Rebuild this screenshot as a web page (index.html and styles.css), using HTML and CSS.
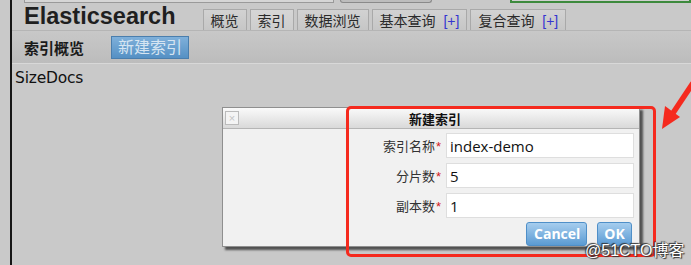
FILE: index.html
```html
<!DOCTYPE html>
<html>
  <head>
    <meta charset="utf-8">
    <link rel="stylesheet" href="styles.css">
  </head>
  <body>
    <div class="frame">
      <div class="topstrip">
        <div class="strip-input"></div>
        <div class="strip-button"></div>
        <div class="strip-green"></div>
      </div>
      <div class="header">
        <h1 class="brand">Elasticsearch</h1>
        <ul class="tabs">
          <li class="tab">概览</li>
          <li class="tab tab-active">索引</li>
          <li class="tab">数据浏览</li>
          <li class="tab">基本查询 <span class="plus">[+]</span></li>
          <li class="tab">复合查询 <span class="plus">[+]</span></li>
        </ul>
      </div>
      <div class="toolbar">
        <span class="toolbar-title">索引概览</span>
        <button class="btn-blue">新建索引</button>
      </div>
      <div class="content">
        <span class="col-head">Size</span><span class="col-head">Docs</span>
      </div>
    </div>

    <div class="dialog">
      <div class="dialog-title">
        <span class="dialog-close">×</span>
        <span class="dialog-caption">新建索引</span>
      </div>
      <div class="dialog-body">
        <form class="dialog-form">
          <label class="field-label">索引名称<span class="req">*</span></label>
          <input class="field-input" type="text" value="index-demo">
          <label class="field-label">分片数<span class="req">*</span></label>
          <input class="field-input" type="text" value="5">
          <label class="field-label">副本数<span class="req">*</span></label>
          <input class="field-input" type="text" value="1">
        </form>
        <div class="dialog-buttons">
          <button class="btn-dlg btn-cancel">Cancel</button>
          <button class="btn-dlg btn-ok">OK</button>
        </div>
      </div>
    </div>

    <div class="highlight"></div>
    <svg class="arrow" width="40" height="60" viewBox="0 0 40 60">
      <line x1="38" y1="2" x2="18" y2="32" stroke="#f52a1e" stroke-width="5.5" />
      <polygon points="7,48 10,25 25,36" fill="#f52a1e" />
    </svg>
    <div class="watermark">@51CTO博客</div>
  </body>
</html>
```

FILE: styles.css
```css
:root {
  --bg: #c9c9c9;
  --line: #a9a9a9;
  --red: #f52a1e;
  --cjk: "Liberation Sans", "Noto Sans CJK SC", sans-serif;
}

html, body {
  margin: 0;
  height: 100%;
}

body {
  background: var(--bg);
  font-family: var(--cjk);
  color: #111;
  overflow: hidden;
  position: relative;
}

.frame {
  margin-left: 10px;
  border-left: 2px solid #161616;
  height: 100%;
  box-sizing: border-box;
}

/* remains of the bar above, cut off by the screenshot */
.topstrip {
  display: flex;
  height: 3px;
  overflow: hidden;
}

.strip-input {
  width: 308px;
  margin-left: 12px;
  border: 1px solid #9a9a9a;
  border-top: none;
  background: #d6d6d6;
}

.strip-button {
  width: 90px;
  margin-left: 6px;
  border: 1px solid #8a8a8a;
  border-top: none;
  border-radius: 0 0 3px 3px;
  background: #bdbdbd;
}

.strip-green {
  flex: 1;
  margin-left: 78px;
  border: 2px solid #3d8a3d;
  border-top: none;
  background: #d0d0d0;
}

.header {
  display: flex;
  align-items: flex-end;
  height: 27px;
}

.brand {
  margin: 0 0 2px 12px;
  font-family: "Liberation Sans", Arial, sans-serif;
  font-size: 23.5px;
  font-weight: bold;
  line-height: 24px;
  color: #1f1f1f;
}

.tabs {
  display: flex;
  gap: 3px;
  margin: 0 0 0 27px;
  padding: 0;
  list-style: none;
}

.tab {
  height: 20px;
  padding: 0 7px;
  border: 1px solid var(--line);
  border-bottom: none;
  background: linear-gradient(#d2d2d2, #c6c6c6);
  font-size: 14px;
  line-height: 23px;
  color: #2a2a2a;
}

.tab-active {
  background: linear-gradient(#d6d6d6, #cdcdcd);
}

.plus {
  margin-left: 4px;
  color: #3535d0;
}

.toolbar {
  display: flex;
  align-items: center;
  height: 32px;
  padding-left: 12px;
  border-top: 1px solid #b5b5b5;
  border-bottom: 1px solid #d8d8d8;
  background: linear-gradient(#c8c8c8, #bcbcbc);
}

.toolbar-title {
  font-size: 15px;
  font-weight: bold;
  color: #1a1a1a;
}

.btn-blue {
  margin-left: 27px;
  height: 23px;
  padding: 0 6px;
  border: 1px solid #4a7ead;
  background: linear-gradient(#7fb0da, #5590c4);
  color: #d6e5f2;
  font-family: var(--cjk);
  font-size: 16px;
  line-height: 21px;
}

.content {
  padding: 5px 0 0 3px;
  font-family: "DejaVu Sans", sans-serif;
  font-size: 15.5px;
  letter-spacing: -0.2px;
  color: #111;
}

.dialog {
  position: absolute;
  left: 222px;
  top: 107px;
  width: 416px;
  height: 138px;
  border: 1px solid #8f8f8f;
  background: #f1f1f1;
  box-shadow: 3px 3px 2px rgba(40, 40, 40, 0.75);
}

.dialog-title {
  display: flex;
  align-items: center;
  height: 20px;
  border-bottom: 1px solid #b5b5b5;
  background: linear-gradient(#fafafa, #d9d9d9);
  position: relative;
}

.dialog-close {
  width: 12px;
  height: 12px;
  margin-left: 2px;
  border: 1px solid #bbb;
  background: #f4f4f4;
  color: #c4c4c4;
  font-size: 11px;
  line-height: 12px;
  text-align: center;
}

.dialog-caption {
  position: absolute;
  left: 186px;
  font-size: 13px;
  font-weight: bold;
  color: #111;
}

.dialog-body {
  padding: 4px 5px 0 0;
}

.dialog-form {
  display: grid;
  grid-template-columns: 218px 188px;
  column-gap: 5px;
  row-gap: 5px;
  align-items: center;
  margin: 0;
}

.field-label {
  text-align: right;
  font-size: 13px;
  color: #333;
}

.req {
  margin-left: 1px;
  color: #d21d1d;
}

.field-input {
  height: 25px;
  box-sizing: border-box;
  padding: 0 3px;
  border: 1px solid #dedede;
  background: #fff;
  font-family: "Open Sans", "Noto Sans", sans-serif;
  font-size: 15px;
  color: #111;
  outline: none;
}

.dialog-buttons {
  display: flex;
  justify-content: flex-end;
  gap: 10px;
  margin-top: 4px;
  padding-right: 2px;
}

.btn-dlg {
  height: 24px;
  padding: 0 7px;
  border: 1px solid #4f8fc8;
  border-radius: 3px;
  background: linear-gradient(#a6cdee, #5b9bd3);
  color: #fff;
  font-family: "Open Sans", "Noto Sans", sans-serif;
  font-size: 14px;
  font-weight: bold;
  line-height: 22px;
}

.btn-cancel {
  width: 61px;
}

.btn-ok {
  width: 35px;
  padding: 0;
}

.highlight {
  position: absolute;
  left: 346px;
  top: 106px;
  width: 304px;
  height: 145px;
  border: 3px solid var(--red);
  border-radius: 5px;
}

.arrow {
  position: absolute;
  left: 655px;
  top: 81px;
}

.watermark {
  position: absolute;
  left: 585px;
  top: 237px;
  font-family: var(--cjk);
  font-size: 16px;
  color: #fff;
  text-shadow: 0 0 1px #333, 1px 1px 1px #333, -1px -1px 1px #333;
}
```
